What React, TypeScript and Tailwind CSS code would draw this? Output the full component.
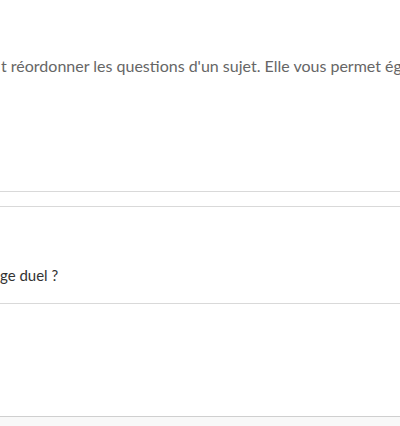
export default function App() {
  return (
    <div className="flex flex-col w-[400px] h-[426px] overflow-hidden bg-white font-['Lato',sans-serif]">
      <div className="flex flex-col h-[192px] border-b border-[#d9d9d9]">
        <p className="pt-[55px] pl-px text-[16px] leading-[22px] text-[#666] whitespace-nowrap">
          t réordonner les questions d'un sujet. Elle vous permet éga
        </p>
      </div>

      <div className="mt-[14px] flex flex-col border-t border-[#d9d9d9]">
        <div className="flex items-end h-[97px] pb-[17px] border-b border-[#d9d9d9]">
          <span className="text-[15px] leading-[22px] text-[#333] whitespace-nowrap">ge duel ?</span>
        </div>
        <div className="h-[113px] border-b border-[#cfcfcf]" />
      </div>

      <div className="flex-1 bg-[#f8f8f8]" />
    </div>
  )
}
